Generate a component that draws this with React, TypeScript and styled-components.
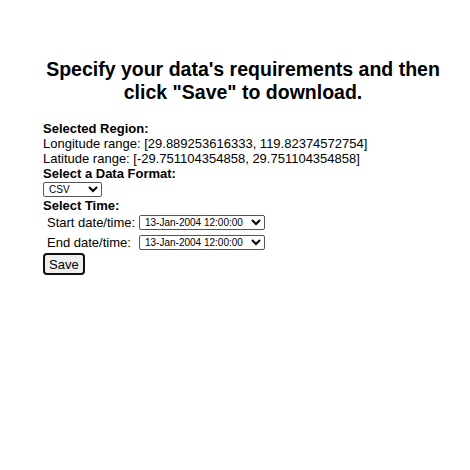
import React from "react";
import styled, { createGlobalStyle } from "styled-components";

const GlobalStyle = createGlobalStyle`
  html, body {
    margin: 0;
    padding: 0;
    background: #fff;
  }
  body {
    font-family: "Liberation Sans", Arial, sans-serif;
    color: #000;
  }
`;

const Page = styled.div`
  width: 400px;
  margin-left: 43px;
  padding-top: 58px;
  font-size: 13px;
  line-height: 15px;
`;

const Title = styled.h2`
  margin: 0 -8px 17px;
  font-size: 19.5px;
  line-height: 23px;
  font-weight: bold;
  text-align: center;
`;

const Label = styled.div`
  font-weight: bold;
`;

const Line = styled.div``;

const Select = styled.select<{ $w: number }>`
  width: ${(p) => p.$w}px;
  height: 15px;
  font-family: "Liberation Sans", Arial, sans-serif;
  font-size: 10px;
  padding: 0 0 0 1px;
  margin: 1px 0;
  border: 1px solid #555;
  border-radius: 2px;
  background: #fff;
  color: #000;
  display: block;
`;

const TimeTable = styled.div`
  display: grid;
  grid-template-columns: 92px auto;
  row-gap: 3px;
  align-items: center;
  padding: 1px 0 0 4px;
`;

const Save = styled.button`
  margin-top: 2px;
  font-family: "Liberation Sans", Arial, sans-serif;
  font-size: 13px;
  height: 22px;
  padding: 0 4px;
  border: 2px solid #111;
  border-radius: 4px;
  background: #efefef;
  color: #000;
`;

export default function App() {
  return (
    <>
      <GlobalStyle />
      <Page>
        <Title>Specify your data's requirements and then click "Save" to download.</Title>
        <Label>Selected Region:</Label>
        <Line>Longitude range: [29.889253616333, 119.82374572754]</Line>
        <Line>Latitude range: [-29.751104354858, 29.751104354858]</Line>
        <Label>Select a Data Format:</Label>
        <Select $w={59} defaultValue="CSV">
          <option>CSV</option>
          <option>NetCDF</option>
        </Select>
        <Label>Select Time:</Label>
        <TimeTable>
          <span>Start date/time:</span>
          <Select $w={126}>
            <option>13-Jan-2004 12:00:00</option>
          </Select>
          <span>End date/time:</span>
          <Select $w={126}>
            <option>13-Jan-2004 12:00:00</option>
          </Select>
        </TimeTable>
        <Save>Save</Save>
      </Page>
    </>
  );
}
